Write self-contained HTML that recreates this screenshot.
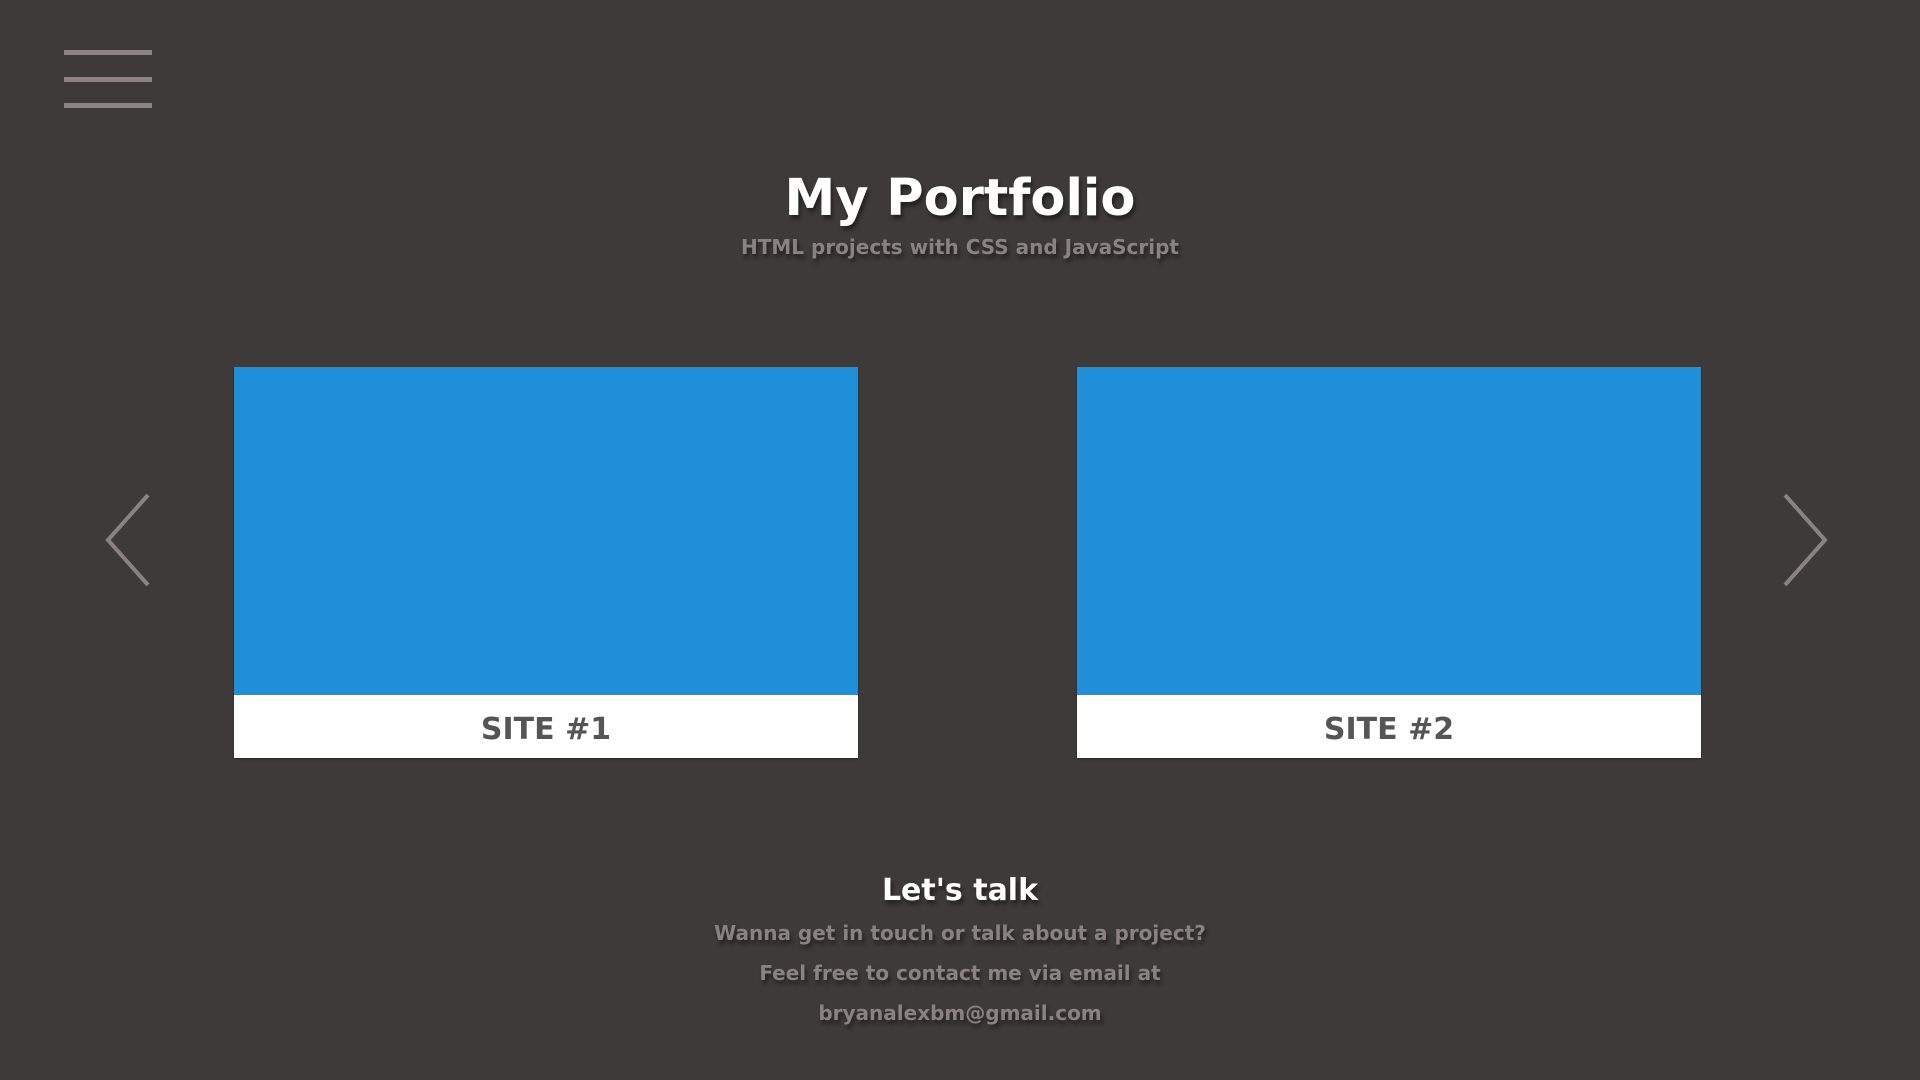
<!DOCTYPE html>
<html><head><meta charset="utf-8"><style>
html,body{margin:0;padding:0;width:1920px;height:1080px;overflow:hidden;background:#3e3a39;font-family:"DejaVu Sans","Liberation Sans",sans-serif;}
.hb{position:absolute;left:64px;width:88px;height:5px;background:#8c8282;}
.t{position:absolute;left:0;width:1920px;text-align:center;font-weight:bold;text-shadow:2px 4px 4px rgba(0,0,0,0.45);}
.card{position:absolute;top:367px;width:624px;height:391px;background:#fff;box-shadow:0 1px 2px rgba(0,0,0,.4);}
.card .img{height:327px;background:#208fd9;border-bottom:1px solid #777;}
.card .lb{height:63px;line-height:69px;text-align:center;color:#555;font-weight:bold;font-size:30px;}
</style></head><body>
<div class="hb" style="top:50px"></div>
<div class="hb" style="top:77px"></div>
<div class="hb" style="top:103px"></div>
<div class="t" style="top:166px;font-size:51px;color:#fff;line-height:66px;">My Portfolio</div>
<div class="t" style="top:234px;font-size:20px;color:#8a8282;line-height:26px;">HTML projects with CSS and JavaScript</div>
<div class="card" style="left:234px"><div class="img"></div><div class="lb">SITE #1</div></div>
<div class="card" style="left:1077px"><div class="img"></div><div class="lb">SITE #2</div></div>
<svg style="position:absolute;left:0;top:0" width="1920" height="1080">
<polyline points="148,495 108,540 148,585" fill="none" stroke="#8a8282" stroke-width="4"/>
<polyline points="1785,495 1825,540 1785,585" fill="none" stroke="#8a8282" stroke-width="4"/>
</svg>
<div class="t" style="top:872px;font-size:30px;color:#fff;line-height:38px;">Let's talk</div>
<div class="t" style="top:920px;font-size:20px;color:#8a8282;line-height:26px;">Wanna get in touch or talk about a project?</div>
<div class="t" style="top:960px;font-size:20px;color:#8a8282;line-height:26px;">Feel free to contact me via email at</div>
<div class="t" style="top:1000px;font-size:20px;color:#8a8282;line-height:26px;">bryanalexbm@gmail.com</div>
</body></html>
